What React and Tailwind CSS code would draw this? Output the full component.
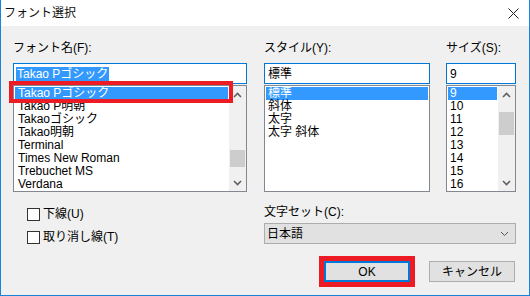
import React from "react";

const fontNames = [
  "Takao Pゴシック",
  "Takao P明朝",
  "Takaoゴシック",
  "Takao明朝",
  "Terminal",
  "Times New Roman",
  "Trebuchet MS",
  "Verdana",
];

const styles = ["標準", "斜体", "太字", "太字 斜体"];
const sizes = ["9", "10", "11", "12", "13", "14", "15", "16"];

function Chevron({ down }) {
  return (
    <svg width="9" height="6" viewBox="0 0 9 6" className="block">
      <path
        d={down ? "M1 1 L4.5 4.5 L8 1" : "M1 5 L4.5 1.5 L8 5"}
        fill="none"
        stroke="#606060"
        strokeWidth="1.6"
      />
    </svg>
  );
}

function Scrollbar({ thumbTop, thumbHeight }) {
  return (
    <div className="flex w-[17px] flex-col bg-[#f0f0f0]">
      <div className="flex h-[17px] items-center justify-center">
        <Chevron />
      </div>
      <div className="flex-1">
        <div
          className="bg-[#cdcdcd] mx-px"
          style={{ marginTop: thumbTop, height: thumbHeight }}
        />
      </div>
      <div className="flex h-[17px] items-center justify-center">
        <Chevron down />
      </div>
    </div>
  );
}

function ListItems({ items, pad = "pl-[3px]" }) {
  return (
    <div className="flex-1 p-px">
      {items.map((item, i) => (
        <div
          key={item}
          className={`h-[13px] leading-[13px] whitespace-nowrap ${pad} ${
            i === 0 ? "bg-[#3399ff] text-white" : "text-black"
          }`}
        >
          {item}
        </div>
      ))}
    </div>
  );
}

function Checkbox({ label }) {
  return (
    <label className="flex h-[13px] items-center gap-[3px]">
      <span className="h-[13px] w-[13px] border border-[#333333] bg-white" />
      <span className="leading-[13px]">{label}</span>
    </label>
  );
}

export default function App() {
  return (
    <div
      className="flex h-[296px] w-[530px] flex-col border-x border-b border-[#1883d7] bg-[#f0f0f0] text-[12px] text-black"
      style={{ fontFamily: '"Liberation Sans", "Noto Sans CJK JP", sans-serif' }}
    >
      {/* title bar */}
      <div className="flex h-[26px] items-center justify-between bg-white pl-[3px] pr-[10px]">
        <span className="text-[12px] text-[#111]">フォント選択</span>
        <svg width="11" height="11" viewBox="0 0 11 11">
          <path d="M0.5 0.5 L10.5 10.5 M10.5 0.5 L0.5 10.5" stroke="#222" strokeWidth="1" />
        </svg>
      </div>

      <div className="flex flex-col pl-[12px] pt-[14px]">
        {/* top columns */}
        <div className="flex">
          <div className="relative w-[234px]">
            <div className="h-[16px] leading-[16px]">フォント名(F):</div>
            <div className="mt-[7px] flex h-[21px] items-center border border-[#0078d7] bg-white pl-[2px]">
              <span className="bg-[#3399ff] px-px leading-[14px] text-white">Takao Pゴシック</span>
            </div>
            <div className="mt-px flex h-[107px] border border-[#828790] bg-white">
              <ListItems items={fontNames} />
              <Scrollbar thumbTop={47} thumbHeight={17} />
            </div>
            <div className="absolute left-[-4px] top-[41px] h-[22px] w-[224px] border-4 border-[#ed1c24]" />
          </div>

          <div className="ml-[17px] w-[166px]">
            <div className="h-[16px] leading-[16px]">スタイル(Y):</div>
            <div className="mt-[7px] flex h-[21px] items-center border border-[#0078d7] bg-white pl-[3px]">
              標準
            </div>
            <div className="mt-px flex h-[107px] border border-[#828790] bg-white">
              <ListItems items={styles} pad="pl-[2px]" />
            </div>
          </div>

          <div className="ml-[16px] w-[70px]">
            <div className="h-[16px] leading-[16px]">サイズ(S):</div>
            <div className="mt-[7px] flex h-[21px] items-center border border-[#0078d7] bg-white pl-[3px]">
              9
            </div>
            <div className="mt-px flex h-[107px] border border-[#828790] bg-white">
              <ListItems items={sizes} pad="pl-[2px]" />
              <Scrollbar thumbTop={9} thumbHeight={23} />
            </div>
          </div>
        </div>

        {/* bottom section */}
        <div className="flex">
          <div className="flex w-[251px] flex-col gap-[10px] pl-[14px] pt-[16px]">
            <Checkbox label="下線(U)" />
            <Checkbox label="取り消し線(T)" />
          </div>

          <div className="flex w-[252px] flex-col">
            <div className="mt-[12px] h-[16px] leading-[16px]">文字セット(C):</div>
            <div className="mt-[3px] flex h-[21px] items-center justify-between border border-[#adadad] bg-[#e1e1e1] pl-[2px] pr-[6px]">
              <span>日本語</span>
              <svg width="9" height="6" viewBox="0 0 9 6">
                <path d="M1 1 L4.5 4.5 L8 1" fill="none" stroke="#555" strokeWidth="1" />
              </svg>
            </div>
            <div className="mt-[17px] flex justify-end gap-[19px] pr-px">
              <div className="relative">
                <button className="flex h-[21px] w-[86px] items-center justify-center border-2 border-[#0078d7] bg-[#e1e1e1]">
                  OK
                </button>
                <div className="absolute -inset-[5px] border-[5px] border-[#ed1c24]" />
              </div>
              <button className="flex h-[21px] w-[86px] items-center justify-center border border-[#adadad] bg-[#e1e1e1]">
                キャンセル
              </button>
            </div>
          </div>
        </div>
      </div>
    </div>
  );
}
